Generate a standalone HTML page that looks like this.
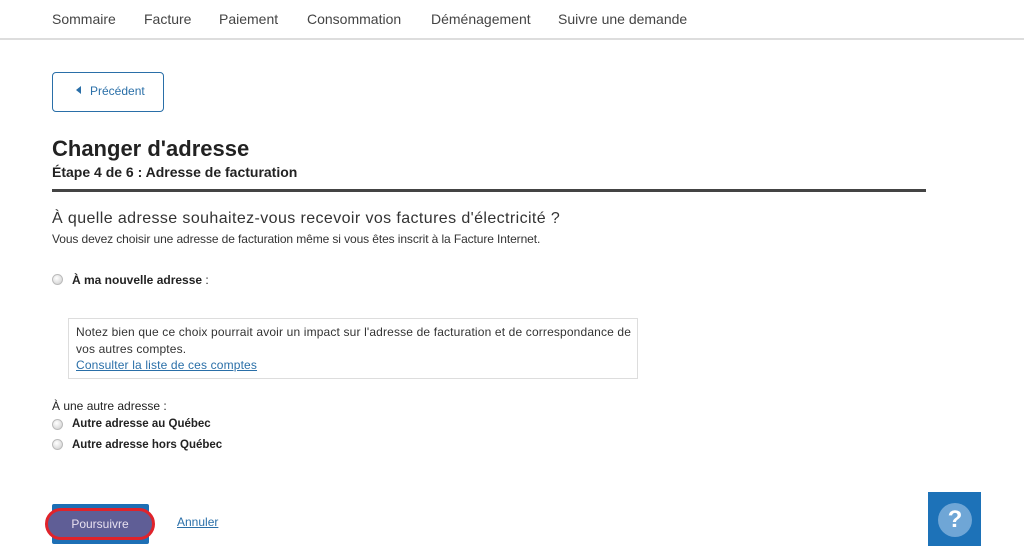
<!DOCTYPE html>
<html><head><meta charset="utf-8"><style>
*{margin:0;padding:0;box-sizing:border-box}
body{width:1024px;height:546px;overflow:hidden;background:#fff;position:relative;font-family:"Liberation Sans",sans-serif;color:#222}
.a{position:absolute;white-space:nowrap}
.nav{position:absolute;left:0;top:0;width:1024px;height:40px;border-bottom:2px solid #ddd}
.nav span{position:absolute;top:11px;font-size:14px;color:#444}
.radio{position:absolute;width:11px;height:11px;border-radius:50%;background:radial-gradient(circle at 40% 35%,#fff,#ccc);border:1px solid #bbb}
</style></head><body>
<div class="nav">
<span style="left:52px">Sommaire</span>
<span style="left:144px">Facture</span>
<span style="left:219px">Paiement</span>
<span style="left:307px">Consommation</span>
<span style="left:431px">Déménagement</span>
<span style="left:558px">Suivre une demande</span>
</div>
<div class="a" style="left:52px;top:72px;width:112px;height:40px;border:1.5px solid #2a6fa8;border-radius:4px"></div>
<div class="a" style="left:76px;top:86px;width:0;height:0;border-top:4px solid transparent;border-bottom:4px solid transparent;border-right:5px solid #2a6fa8"></div>
<div class="a" style="left:90px;top:84px;font-size:12px;color:#2a6fa8">Précédent</div>
<div class="a" style="left:52px;top:136px;font-size:22px;font-weight:bold;color:#222">Changer d'adresse</div>
<div class="a" style="left:52px;top:164px;font-size:14px;font-weight:bold;color:#222">Étape 4 de 6 : Adresse de facturation</div>
<div class="a" style="left:52px;top:189px;width:874px;height:3px;background:#444"></div>
<div class="a" style="left:52px;top:210px;font-size:16px;color:#333;letter-spacing:0.4px">À quelle adresse souhaitez-vous recevoir vos factures d'électricité ?</div>
<div class="a" style="left:52px;top:232px;font-size:12px;color:#333;letter-spacing:-0.1px">Vous devez choisir une adresse de facturation même si vous êtes inscrit à la Facture Internet.</div>
<div class="radio" style="left:52px;top:274px"></div>
<div class="a" style="left:72px;top:273px;font-size:12px"><b>À ma nouvelle adresse</b> :</div>
<div class="a" style="left:68px;top:318px;width:570px;height:61px;border:1px solid #ddd"></div>
<div class="a" style="left:76px;top:324px;font-size:12px;line-height:16.5px;color:#333;letter-spacing:0.15px">Notez bien que ce choix pourrait avoir un impact sur l'adresse de facturation et de correspondance de<br>vos autres comptes.<br><span style="color:#2a6fa8;text-decoration:underline">Consulter la liste de ces comptes</span></div>
<div class="a" style="left:52px;top:399px;font-size:12px">À une autre adresse :</div>
<div class="radio" style="left:52px;top:419px"></div>
<div class="a" style="left:72px;top:418px;font-size:11.5px;font-weight:bold">Autre adresse au Québec</div>
<div class="radio" style="left:52px;top:439px"></div>
<div class="a" style="left:72px;top:439px;font-size:11.5px;font-weight:bold">Autre adresse hors Québec</div>
<div class="a" style="left:52px;top:504px;width:97px;height:40px;background:#1d6fb5;border-radius:2px"></div>
<div class="a" style="left:45px;top:508px;width:110px;height:32px;background:#5f5e96;border:3px solid #e0232b;border-radius:16px;color:#e8e0f0;font-size:12px;text-align:center;line-height:26px">Poursuivre</div>
<div class="a" style="left:177px;top:515px;font-size:12px;color:#2a6fa8;text-decoration:underline">Annuler</div>
<div class="a" style="left:928px;top:492px;width:53px;height:54px;background:#1d72b8"></div>
<div class="a" style="left:938px;top:503px;width:34px;height:34px;border-radius:50%;background:#6fa6d6;color:#fff;font-size:24px;font-weight:bold;text-align:center;line-height:34px">?</div>
</body></html>
